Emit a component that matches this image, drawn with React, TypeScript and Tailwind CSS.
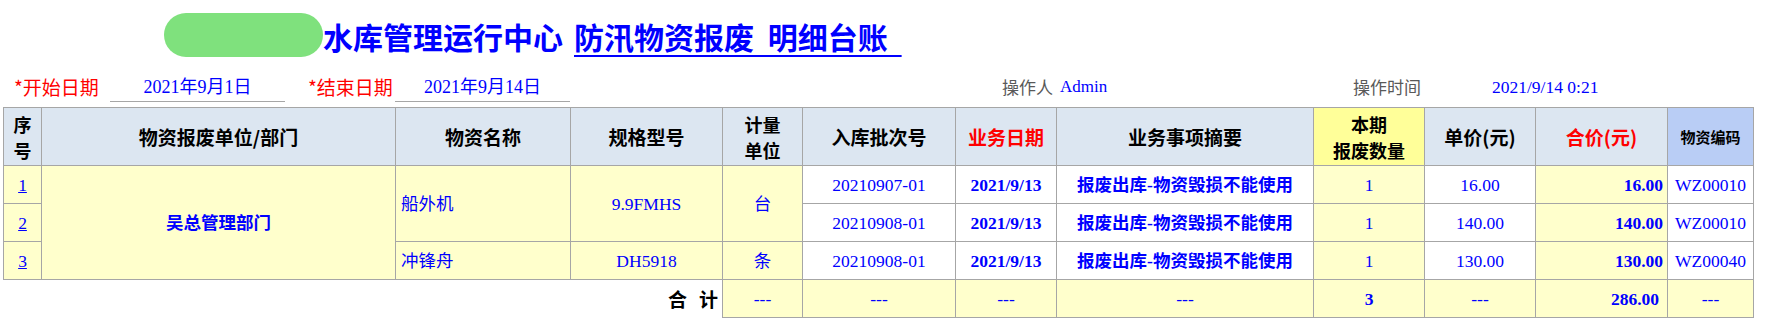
const sans = "font-['Noto_Sans_CJK_SC','Noto_Sans',sans-serif]";
const serif = "font-['Liberation_Serif','Noto_Sans_CJK_SC',serif]";

const cell = "border border-[#A6A6A6] p-0 text-center align-middle";
const th = `${cell} font-bold text-black text-[19px] leading-[24px]`;
const td = `${cell} text-[17.5px] leading-[22px] text-[#0000FF]`;
const yel = "bg-[#FFFFCC]";

interface Linha {
  seq: number;
  lote: string;
  qtd: string;
  preco: string;
  total: string;
  codigo: string;
}

const linhas: Linha[] = [
  { seq: 1, lote: '20210907-01', qtd: '1', preco: '16.00', total: '16.00', codigo: 'WZ00010' },
  { seq: 2, lote: '20210908-01', qtd: '1', preco: '140.00', total: '140.00', codigo: 'WZ00010' },
  { seq: 3, lote: '20210908-01', qtd: '1', preco: '130.00', total: '130.00', codigo: 'WZ00040' },
];

const larguras = [38, 354, 175, 152, 80, 153, 101, 257, 111, 111, 132, 86];

export default function App() {
  return (
    <div className={`w-[1765px] h-[326px] bg-white overflow-hidden ${sans}`}>
      {/* titulo */}
      <div className="flex items-start h-[62px] pt-[13px] pl-[164px]">
        <div className="w-[159px] h-[44px] rounded-[22px] bg-[#7FE17D]" />
        <div className="flex items-start mt-[1px] text-[30px] leading-[44px] font-bold text-[#0000FF] whitespace-pre">
          <span>水库管理运行中心</span>
          <span className="ml-[11px] underline decoration-2 underline-offset-[6px] [word-spacing:7px]">{'防汛物资报废 明细台账 '}</span>
        </div>
      </div>

      {/* filtros */}
      <div className="flex items-start h-[45px] pt-[13px]">
        <div className="w-[110px] pl-[14px] text-[19px] leading-[24px] text-[#FF0000]">*开始日期</div>
        <div className={`w-[175px] h-[27px] border-b border-[#A6A6A6] text-center text-[18px] leading-[24px] text-[#0000FF] ${serif}`}>
          2021年9月1日
        </div>
        <div className="w-[110px] pl-[23px] text-[19px] leading-[24px] text-[#FF0000]">*结束日期</div>
        <div className={`w-[175px] h-[27px] border-b border-[#A6A6A6] text-center text-[18px] leading-[24px] text-[#0000FF] ${serif}`}>
          2021年9月14日
        </div>
        <div className="w-[432px]" />
        <div className="w-[58px] text-[17px] leading-[24px] text-[#595959]">操作人</div>
        <div className={`w-[293px] text-[17px] leading-[24px] text-[#0000FF] ${serif}`}>Admin</div>
        <div className="w-[139px] text-[17px] leading-[24px] text-[#595959]">操作时间</div>
        <div className={`text-[17.5px] leading-[24px] text-[#0000FF] ${serif}`}>2021/9/14 0:21</div>
      </div>

      {/* tabela */}
      <table className="ml-[3px] w-[1750px] table-fixed border-collapse">
        <colgroup>
          {larguras.map((w, i) => (
            <col key={i} style={{ width: w }} />
          ))}
        </colgroup>
        <thead>
          <tr className="h-[58px] bg-[#DCE6F1]">
            <th className={`${th} !text-[18px] !leading-[26px]`}>序<br />号</th>
            <th className={th}>物资报废单位/部门</th>
            <th className={th}>物资名称</th>
            <th className={th}>规格型号</th>
            <th className={`${th} !text-[18px] !leading-[26px]`}>计量<br />单位</th>
            <th className={th}>入库批次号</th>
            <th className={`${th} !text-[#FF0000]`}>业务日期</th>
            <th className={th}>业务事项摘要</th>
            <th className={`${th} bg-[#FFFF99] !text-[18px] !leading-[26px]`}>本期<br />报废数量</th>
            <th className={th}>单价(元)</th>
            <th className={`${th} !text-[#FF0000]`}>合价(元)</th>
            <th className={`${th} bg-[#B9CDF5] !text-[15px]`}>物资编码</th>
          </tr>
        </thead>
        <tbody className={serif}>
          {linhas.map((l) => (
            <tr key={l.seq} className="h-[38px]">
              <td className={`${td} ${yel}`}>
                <span className="underline">{l.seq}</span>
              </td>
              {l.seq === 1 && (
                <td rowSpan={3} className={`${td} ${yel} font-bold`}>吴总管理部门</td>
              )}
              {l.seq === 1 && (
                <>
                  <td rowSpan={2} className={`${td} ${yel} !text-left pl-[5px]`}>船外机</td>
                  <td rowSpan={2} className={`${td} ${yel}`}>9.9FMHS</td>
                  <td rowSpan={2} className={`${td} ${yel}`}>台</td>
                </>
              )}
              {l.seq === 3 && (
                <>
                  <td className={`${td} ${yel} !text-left pl-[5px]`}>冲锋舟</td>
                  <td className={`${td} ${yel}`}>DH5918</td>
                  <td className={`${td} ${yel}`}>条</td>
                </>
              )}
              <td className={td}>{l.lote}</td>
              <td className={`${td} font-bold`}>2021/9/13</td>
              <td className={`${td} font-bold`}>报废出库-物资毁损不能使用</td>
              <td className={`${td} ${yel}`}>{l.qtd}</td>
              <td className={td}>{l.preco}</td>
              <td className={`${td} ${yel} font-bold !text-right pr-[4px]`}>{l.total}</td>
              <td className={td}>{l.codigo}</td>
            </tr>
          ))}
          <tr className="h-[38px]">
            <td colSpan={4} className={`border-0 p-0 text-right pr-[4px] text-[19px] font-bold text-black ${sans}`}>
              <span className="mr-[12px]">合</span>计
            </td>
            <td className={`${td} ${yel}`}>---</td>
            <td className={`${td} ${yel}`}>---</td>
            <td className={`${td} ${yel}`}>---</td>
            <td className={`${td} ${yel}`}>---</td>
            <td className={`${td} ${yel} font-bold`}>3</td>
            <td className={`${td} ${yel}`}>---</td>
            <td className={`${td} ${yel} font-bold !text-right pr-[8px]`}>286.00</td>
            <td className={`${td} ${yel}`}>---</td>
          </tr>
        </tbody>
      </table>
    </div>
  );
}
